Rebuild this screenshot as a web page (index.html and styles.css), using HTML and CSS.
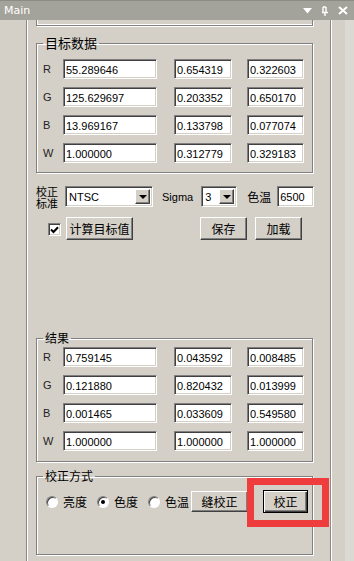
FILE: index.html
```html
<!DOCTYPE html>
<html>
<head>
	<meta charset="utf-8">
	<title>Main</title>
	<link rel="stylesheet" href="styles.css">
</head>
<body>
	<div class="window">
		<div class="titlebar">
			<span class="title">Main</span>
			<span class="tools">
				<svg width="9" height="6" viewBox="0 0 9 6"><path d="M0 0H9L4.5 5.5Z" fill="#fff"/></svg>
				<svg width="8" height="10" viewBox="0 0 8 10"><path d="M2 1V6M5 1V6M1 6.5H7M4 6.5V10M2 1H5" stroke="#fff" stroke-width="1.4" fill="none"/></svg>
				<svg width="10" height="9" viewBox="0 0 10 9"><path d="M1 1L9 8M9 1L1 8" stroke="#fff" stroke-width="2" fill="none"/></svg>
			</span>
		</div>
		<div class="main">
			<div class="gutter"></div>
			<div class="panel">
				<div class="cut-box"></div>

				<fieldset class="group target">
					<legend>目标数据</legend>
					<div class="grid">
						<span class="ch">R</span><input class="w1" value="55.289646"><input class="w2" value="0.654319"><input class="w3" value="0.322603">
						<span class="ch">G</span><input class="w1" value="125.629697"><input class="w2" value="0.203352"><input class="w3" value="0.650170">
						<span class="ch">B</span><input class="w1" value="13.969167"><input class="w2" value="0.133798"><input class="w3" value="0.077074">
						<span class="ch">W</span><input class="w1" value="1.000000"><input class="w2" value="0.312779"><input class="w3" value="0.329183">
					</div>
				</fieldset>

				<div class="std-row">
					<span class="two-line"><span>校正</span><span>标准</span></span>
					<div class="combo ntsc"><span>NTSC</span><i class="drop"></i></div>
					<span class="lbl sigma">Sigma</span>
					<div class="combo sig"><span>3</span><i class="drop"></i></div>
					<span class="lbl temp">色温</span>
					<input class="temp-in" value="6500">
				</div>

				<div class="btn-row">
					<span class="check"><svg width="9" height="8" viewBox="0 0 9 8"><path d="M1 3.5L3.5 6L8 1.2" stroke="#000" stroke-width="2" fill="none"/></svg></span>
					<button class="btn calc">计算目标值</button>
					<button class="btn save">保存</button>
					<button class="btn load">加载</button>
				</div>

				<fieldset class="group result">
					<legend>结果</legend>
					<div class="grid">
						<span class="ch">R</span><input class="w1" value="0.759145"><input class="w2" value="0.043592"><input class="w3" value="0.008485">
						<span class="ch">G</span><input class="w1" value="0.121880"><input class="w2" value="0.820432"><input class="w3" value="0.013999">
						<span class="ch">B</span><input class="w1" value="0.001465"><input class="w2" value="0.033609"><input class="w3" value="0.549580">
						<span class="ch">W</span><input class="w1" value="1.000000"><input class="w2" value="1.000000"><input class="w3" value="1.000000">
					</div>
				</fieldset>

				<fieldset class="group mode">
					<legend>校正方式</legend>
					<div class="mode-row">
						<span class="radio"></span><span class="opt">亮度</span>
						<span class="radio on"></span><span class="opt">色度</span>
						<span class="radio"></span><span class="opt">色温</span>
						<button class="btn seam">缝校正</button>
						<button class="btn default">校正</button>
					</div>
				</fieldset>

				<div class="mark"></div>
			</div>
			<div class="side"></div>
			<div class="strip"></div>
		</div>
	</div>
</body>
</html>
```

FILE: styles.css
```css
body {
	margin: 0;
	background-color: #d4d0c8;
	font-family: "Liberation Sans", "Noto Sans CJK SC", sans-serif;
	font-size: 12px;
	color: #000;
}
.window {
	width: 354px;
	height: 561px;
	overflow: hidden;
	display: flex;
	flex-direction: column;
}
.titlebar {
	height: 20px;
	box-sizing: border-box;
	background-color: #a4a39b;
	border-top: 1px solid #8c8b84;
	display: flex;
	align-items: center;
	justify-content: space-between;
	color: #fff;
}
.title {
	padding-left: 4px;
	font-family: "DejaVu Sans", sans-serif;
	font-size: 11px;
}
.tools {
	display: flex;
	align-items: center;
	gap: 9px;
	padding-right: 6px;
}
.main {
	flex: 1;
	display: flex;
}
.gutter {
	width: 26px;
}
.panel {
	position: relative;
	width: 294px;
	border-left: 1px solid #8a8a8a;
	border-right: 1px solid #8a8a8a;
	box-shadow: inset 1px 0 0 #fff, 1px 0 0 #fff;
	padding-left: 9px;
}
.side {
	width: 13px;
	margin-left: 1px;
}
.strip {
	flex: 1;
	background-color: #dcd9d2;
}

/* group boxes */
.cut-box {
	width: 275px;
	height: 5px;
	border: 1px solid #808080;
	border-top: none;
	box-shadow: inset 1px -1px 0 #fff, 1px 1px 0 #fff;
}
.group {
	width: 275px;
	margin: 0;
	padding: 0;
	border: 1px solid #808080;
	box-shadow: inset 1px 1px 0 #fff, 1px 1px 0 #fff;
	min-width: 0;
}
.group legend {
	margin-left: 6px;
	padding: 0 2px;
	font-size: 12px;
	line-height: 14px;
	font-family: "Noto Sans CJK SC", sans-serif;
}
.target {
	margin-top: 9px;
	padding-bottom: 9px;
}
.target legend {
	font-size: 13px;
	line-height: 16px;
}
.grid {
	display: grid;
	grid-template-columns: 26px 111px 73px 57px;
	row-gap: 8px;
	padding-top: 8px;
	align-items: center;
}
.result .grid {
	padding-top: 2px;
}
.ch {
	padding-left: 6px;
	font-size: 11px;
	color: #222;
}
input {
	height: 20px;
	box-sizing: border-box;
	margin: 0;
	padding: 1px 2px 0;
	font-family: "Liberation Sans", sans-serif;
	font-size: 11px;
	background-color: #fff;
	border: 1px solid;
	border-color: #808080 #fff #fff #808080;
	box-shadow: inset 1px 1px 0 #404040, inset -1px -1px 0 #d4d0c8;
	outline: none;
}
.w1 {
	width: 94px;
}
.w2 {
	width: 58px;
}
.w3 {
	width: 57px;
}

/* calibration standard row */
.std-row {
	display: flex;
	align-items: center;
	margin-top: 12px;
	height: 23px;
}
.two-line {
	display: flex;
	flex-direction: column;
	width: 29px;
	font-family: "Noto Sans CJK SC", sans-serif;
	font-size: 11px;
	line-height: 12px;
}
.combo {
	height: 21px;
	box-sizing: border-box;
	background-color: #fff;
	border: 1px solid;
	border-color: #808080 #fff #fff #808080;
	box-shadow: inset 1px 1px 0 #404040, inset -1px -1px 0 #d4d0c8;
	display: flex;
	align-items: center;
	justify-content: space-between;
	padding: 0 2px 0 3px;
	font-size: 11px;
}
.ntsc {
	width: 88px;
}
.sig {
	width: 36px;
}
.drop {
	width: 15px;
	height: 15px;
	box-sizing: border-box;
	background-color: #d4d0c8;
	border: 1px solid;
	border-color: #fff #404040 #404040 #fff;
	box-shadow: inset -1px -1px 0 #808080;
	position: relative;
}
.drop::after {
	content: "";
	position: absolute;
	left: 3px;
	top: 5px;
	border-left: 4px solid transparent;
	border-right: 4px solid transparent;
	border-top: 4px solid #000;
}
.lbl {
	font-size: 11px;
}
.sigma {
	margin: 0 8px 0 9px;
}
.temp {
	font-family: "Noto Sans CJK SC", sans-serif;
	font-size: 12px;
	margin: 0 6px 0 10px;
}
.temp-in {
	width: 37px;
	height: 21px;
}

/* action buttons */
.btn-row {
	display: flex;
	align-items: center;
	margin-top: 9px;
	height: 23px;
}
.check {
	width: 13px;
	height: 13px;
	box-sizing: border-box;
	margin: 2px 0 0 12px;
	background-color: #fff;
	border: 1px solid;
	border-color: #808080 #fff #fff #808080;
	box-shadow: inset 1px 1px 0 #404040, inset -1px -1px 0 #d4d0c8;
	display: flex;
	align-items: center;
	justify-content: center;
}
.btn {
	height: 23px;
	box-sizing: border-box;
	margin: 0;
	padding: 0;
	background-color: #d4d0c8;
	border: 1px solid;
	border-color: #fff #404040 #404040 #fff;
	box-shadow: inset -1px -1px 0 #808080;
	font-family: "Noto Sans CJK SC", sans-serif;
	font-size: 12px;
	color: #000;
}
.calc {
	width: 67px;
	margin-left: 5px;
}
.save {
	width: 47px;
	margin-left: 67px;
}
.load {
	width: 47px;
	margin-left: 8px;
}

.result {
	margin-top: 91px;
	padding-bottom: 10px;
}
.mode {
	margin-top: 7px;
	padding-bottom: 41px;
}
.mode-row {
	display: flex;
	align-items: center;
	padding-top: 7px;
}
.radio {
	width: 12px;
	height: 12px;
	border-radius: 50%;
	box-sizing: border-box;
	background-color: #fff;
	border: 1px solid;
	border-color: #808080 #fff #fff #808080;
	box-shadow: inset 1px 1px 0 #404040;
	margin-left: 10px;
	position: relative;
}
.radio:first-child {
	margin-left: 9px;
}
.radio.on::after {
	content: "";
	position: absolute;
	left: 3px;
	top: 3px;
	width: 4px;
	height: 4px;
	border-radius: 50%;
	background-color: #000;
}
.opt {
	font-family: "Noto Sans CJK SC", sans-serif;
	font-size: 12px;
	margin-left: 5px;
}
.seam {
	width: 57px;
	height: 21px;
	margin-left: 2px;
}
.default {
	width: 45px;
	height: 23px;
	margin-left: 15px;
	border: 1px solid #000;
	box-shadow: inset 1px 1px 0 #fff, inset -1px -1px 0 #404040, inset -2px -2px 0 #808080;
}

/* red highlight drawn over the screenshot */
.mark {
	position: absolute;
	left: 220px;
	top: 458px;
	width: 82px;
	height: 49px;
	box-sizing: border-box;
	border: 7px solid #ef3d3d;
}
```
